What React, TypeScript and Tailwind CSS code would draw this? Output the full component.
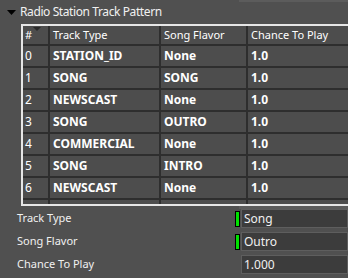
const rows = [
  ["0", "STATION_ID", "None", "1.0"],
  ["1", "SONG", "SONG", "1.0"],
  ["2", "NEWSCAST", "None", "1.0"],
  ["3", "SONG", "OUTRO", "1.0"],
  ["4", "COMMERCIAL", "None", "1.0"],
  ["5", "SONG", "INTRO", "1.0"],
  ["6", "NEWSCAST", "None", "1.0"],
  ["", "", "", ""],
];

const cols = "grid grid-cols-[27px_111px_87px_160px]";

const Field = ({ value, flag }: { value: string; flag?: boolean }) => (
  <div className="flex items-center h-[19px]">
    <div className="w-[5px] h-[16px] mr-[1px] flex">
      {flag && <div className="w-full h-full bg-[#00e000] border border-black" />}
    </div>
    <div className="flex-1 h-full bg-[#3c3c3c] border border-[#5e5e5e] pl-[2px] flex items-center text-[12px] text-[#f0f0f0]">
      {value}
    </div>
  </div>
);

const App = () => {
  return (
    <div
      className="w-[348px] h-[278px] overflow-hidden bg-[#505050] text-white"
      style={{ fontFamily: '"Noto Sans", "DejaVu Sans", sans-serif' }}
    >
      <div className="h-[2px] ml-[239px] bg-[#5c5c5c]" />
      <div className="h-[20px] flex items-center pl-[7px]">
        <svg width="9" height="5" viewBox="0 0 9 5" className="mr-[4px]">
          <polygon points="0,0 9,0 4.5,5" fill="#000" />
        </svg>
        <span className="text-[12px] tracking-[-0.4px] text-[#f0f0f0]">Radio Station Track Pattern</span>
      </div>
      <div className="ml-[21px] mt-[2px] h-[182px] w-[360px] border-t-2 border-l-2 border-b-2 border-[#e6e6e6] overflow-hidden bg-[#4d4d4d]">
        <div className={`${cols} h-[20px] border-b-2 border-[#2e2e2e] text-[11px]`}>
          <div className="relative pl-[2px] flex items-center border-r-2 border-[#2e2e2e]">
            #
            <svg width="8" height="4" viewBox="0 0 8 4" className="absolute left-[10px] top-[1px]">
              <polygon points="0,0 8,0 4,4" fill="#2a2a2a" />
            </svg>
          </div>
          <div className="pl-[3px] flex items-center border-r-2 border-[#2e2e2e]">Track Type</div>
          <div className="pl-[3px] flex items-center border-r-2 border-[#2e2e2e]">Song Flavor</div>
          <div className="pl-[3px] flex items-center">Chance To Play</div>
        </div>
        {rows.map((r, i) => (
          <div key={i} className={`${cols} h-[22px] border-b-2 border-[#2e2e2e] text-[12px]`}>
            <div className="pl-[2px] flex items-center border-r-2 border-[#2e2e2e]">{r[0]}</div>
            <div className="pl-[3px] flex items-center font-bold border-r-2 border-[#2e2e2e]">{r[1]}</div>
            <div className="pl-[3px] flex items-center font-bold border-r-2 border-[#2e2e2e]">{r[2]}</div>
            <div className="pl-[3px] flex items-center font-bold">{r[3]}</div>
          </div>
        ))}
      </div>
      <div className="h-[3px] ml-[239px] bg-[#5c5c5c]" />
      <div className="grid grid-cols-[218px_1fr] gap-y-[4px] pl-[17px] text-[11px] text-[#f0f0f0]">
        <div className="h-[19px] flex items-center">Track Type</div>
        <Field value="Song" flag />
        <div className="h-[19px] flex items-center">Song Flavor</div>
        <Field value="Outro" flag />
        <div className="h-[19px] flex items-center">Chance To Play</div>
        <Field value="1.000" />
      </div>
    </div>
  );
};

export default App;
